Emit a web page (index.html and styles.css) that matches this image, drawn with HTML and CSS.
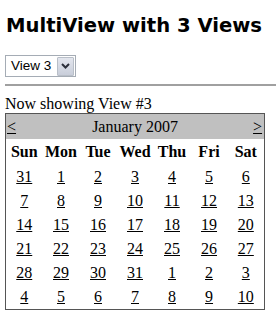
FILE: index.html
```html
<!DOCTYPE html>
<html>
<head>
<meta charset="utf-8">
<link rel="stylesheet" href="styles.css">
</head>
<body>
<h1 class="title">MultiView with 3 Views</h1>
<div class="select">
  <span class="select-text">View 3</span>
  <span class="select-btn"><svg width="9" height="6" viewBox="0 0 9 6"><path d="M1 1 L4.5 4.5 L8 1" fill="none" stroke="#2b2f3a" stroke-width="2"/></svg></span>
</div>
<hr class="rule">
<p class="status">Now showing View #3</p>
<table class="cal">
  <colgroup><col class="c"><col class="c"><col class="c"><col class="c"><col class="c"><col class="c"><col class="c"></colgroup>
  <tr class="cal-head">
    <td class="nav"><a href="#">&lt;</a></td>
    <td colspan="5" class="month">January 2007</td>
    <td class="nav nav-r"><a href="#">&gt;</a></td>
  </tr>
  <tr class="dow">
    <th>Sun</th><th>Mon</th><th>Tue</th><th>Wed</th><th>Thu</th><th>Fri</th><th>Sat</th>
  </tr>
  <tr><td><a href="#">31</a></td><td><a href="#">1</a></td><td><a href="#">2</a></td><td><a href="#">3</a></td><td><a href="#">4</a></td><td><a href="#">5</a></td><td><a href="#">6</a></td></tr>
  <tr><td><a href="#">7</a></td><td><a href="#">8</a></td><td><a href="#">9</a></td><td><a href="#">10</a></td><td><a href="#">11</a></td><td><a href="#">12</a></td><td><a href="#">13</a></td></tr>
  <tr><td><a href="#">14</a></td><td><a href="#">15</a></td><td><a href="#">16</a></td><td><a href="#">17</a></td><td><a href="#">18</a></td><td><a href="#">19</a></td><td><a href="#">20</a></td></tr>
  <tr><td><a href="#">21</a></td><td><a href="#">22</a></td><td><a href="#">23</a></td><td><a href="#">24</a></td><td><a href="#">25</a></td><td><a href="#">26</a></td><td><a href="#">27</a></td></tr>
  <tr><td><a href="#">28</a></td><td><a href="#">29</a></td><td><a href="#">30</a></td><td><a href="#">31</a></td><td><a href="#">1</a></td><td><a href="#">2</a></td><td><a href="#">3</a></td></tr>
  <tr><td><a href="#">4</a></td><td><a href="#">5</a></td><td><a href="#">6</a></td><td><a href="#">7</a></td><td><a href="#">8</a></td><td><a href="#">9</a></td><td><a href="#">10</a></td></tr>
</table>
</body>
</html>
```
FILE: styles.css
```css
html, body {
  margin: 0;
  padding: 0;
  background: #fff;
}
body {
  padding: 0 0 0 5px;
  font-family: "Liberation Serif", "Times New Roman", serif;
  font-size: 16px;
  color: #000;
  overflow: hidden;
}
.title {
  font-family: "DejaVu Sans", Verdana, sans-serif;
  font-weight: bold;
  font-size: 19.6px;
  line-height: 24px;
  margin: 14px 0 0 1px;
  white-space: nowrap;
}
.select {
  margin-top: 17px;
  height: 20px;
  border: 1px solid #a5acb5;
  display: flex;
  align-items: center;
  justify-content: space-between;
  padding-left: 5px;
  box-sizing: content-box;
  width: 64px;
}
.select-text {
  font-family: "Liberation Sans", Arial, sans-serif;
  font-size: 13.5px;
  line-height: 16px;
}
.select-btn {
  width: 15px;
  height: 17px;
  margin-right: 1px;
  border: 1px solid #b9bfc8;
  background: linear-gradient(#e3e6ee, #c9ceda);
  border-radius: 1px;
  display: flex;
  align-items: center;
  justify-content: center;
}
.rule {
  margin: 7px -10px 0 0;
  border: 0;
  height: 2px;
  background: #a0a0a0;
}
.status {
  margin: 9px 0 0 0;
  line-height: 18px;
}
.cal {
  border-collapse: collapse;
  border: 1px solid #555;
  width: 259px;
  margin-top: 0;
  table-layout: fixed;
}
.cal col.c {
  width: 37px;
}
.cal td, .cal th {
  padding: 0;
  text-align: center;
  white-space: nowrap;
}
.cal a {
  color: #000;
  text-decoration: underline;
}
.cal-head {
  background: #c0c0c0;
}
.cal-head td {
  height: 25px;
}
.cal-head .nav {
  text-align: left;
  padding-left: 1px;
}
.cal-head .nav-r {
  text-align: right;
  padding-right: 2px;
  padding-left: 0;
}
.dow th {
  font-weight: bold;
  height: 26px;
}
.cal tr + tr + tr td {
  height: 24px;
}
```
